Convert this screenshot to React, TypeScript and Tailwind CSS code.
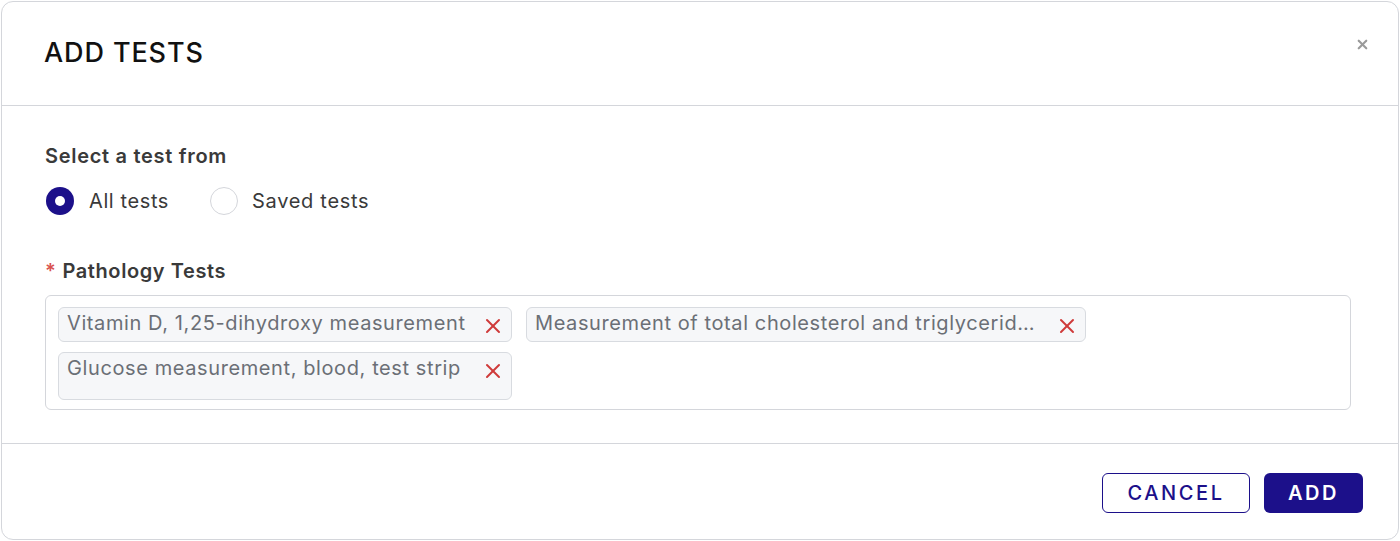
import { X } from 'lucide-react'

const chips = [
  { label: 'Vitamin D, 1,25-dihydroxy measurement', w: 'w-[454px]', h: 'h-[35px]' },
  { label: 'Measurement of total cholesterol and triglycerid…', w: 'w-[560px]', h: 'h-[35px]' },
  { label: 'Glucose measurement, blood, test strip', w: 'w-[454px]', h: 'h-[48px]' },
]

export default function App() {
  return (
    <div className="w-[1400px] h-[541px] bg-white p-px font-['Inter',sans-serif]">
      <div className="h-[539px] w-[1398px] rounded-[12px] border border-[#d4d6db] flex flex-col">
        {/* Header */}
        <div className="h-[104px] border-b border-[#d4d6db] flex items-start justify-between pl-[42px] pr-[28px]">
          <h2 className="mt-[34px] text-[27px] leading-[34px] font-medium text-[#111] tracking-[0.9px]">ADD TESTS</h2>
          <button className="mt-[35px] text-[#9a9a9a]">
            <X size={15} strokeWidth={3.5} />
          </button>
        </div>

        {/* Body */}
        <div className="flex-1 border-b border-[#d4d6db] pl-[43px] pr-[47px] pt-[37px]">
          <p className="text-[20px] leading-[26px] font-semibold text-[#3a3a3a] tracking-[0.7px]">Select a test from</p>
          <div className="mt-[17px] flex items-center gap-[41px]">
            <label className="flex items-center gap-[15px]">
              <span className="ml-px w-[28px] h-[28px] rounded-full bg-[#1c108a] flex items-center justify-center">
                <span className="w-[10px] h-[10px] rounded-full bg-white" />
              </span>
              <span className="text-[20px] text-[#3a3a3a] tracking-[0.6px]">All tests</span>
            </label>
            <label className="flex items-center gap-[14px]">
              <span className="w-[28px] h-[28px] rounded-full border border-[#d4d6db] bg-white" />
              <span className="text-[20px] text-[#3a3a3a] tracking-[0.7px]">Saved tests</span>
            </label>
          </div>

          <p className="mt-[42px] text-[20px] leading-[26px] font-semibold text-[#3a3a3a] tracking-[0.6px]">
            <span className="text-[#d9534f] mr-[6px]">*</span>Pathology Tests
          </p>
          <div className="mt-[11px] h-[115px] rounded-[6px] border border-[#d4d6db] px-[12px] pt-[11px] flex flex-wrap content-start gap-x-[14px] gap-y-[10px]">
            {chips.map((c) => (
              <div
                key={c.label}
                className={`${c.w} ${c.h} rounded-[6px] border border-[#d8dbe0] bg-[#f6f7f9] flex items-start pl-[8px] pr-[6px]`}
              >
                <span className="max-w-[506px] truncate text-[20px] leading-[31px] text-[#6b6f76] tracking-[0.6px]">{c.label}</span>
                <X className="mt-[6px] ml-auto shrink-0 text-[#cf3a3a]" size={24} strokeWidth={2} />
              </div>
            ))}
          </div>
        </div>

        {/* Footer */}
        <div className="h-[95px] flex items-start justify-end gap-[14px] pr-[35px] pt-[29px]">
          <button className="w-[148px] h-[40px] rounded-[6px] border border-[#1c108a] text-[#1c108a] text-[20px] font-medium tracking-[2.6px]">
            CANCEL
          </button>
          <button className="w-[99px] h-[40px] rounded-[6px] bg-[#1c108a] text-white text-[20px] font-semibold tracking-[2.6px]">
            ADD
          </button>
        </div>
      </div>
    </div>
  )
}
